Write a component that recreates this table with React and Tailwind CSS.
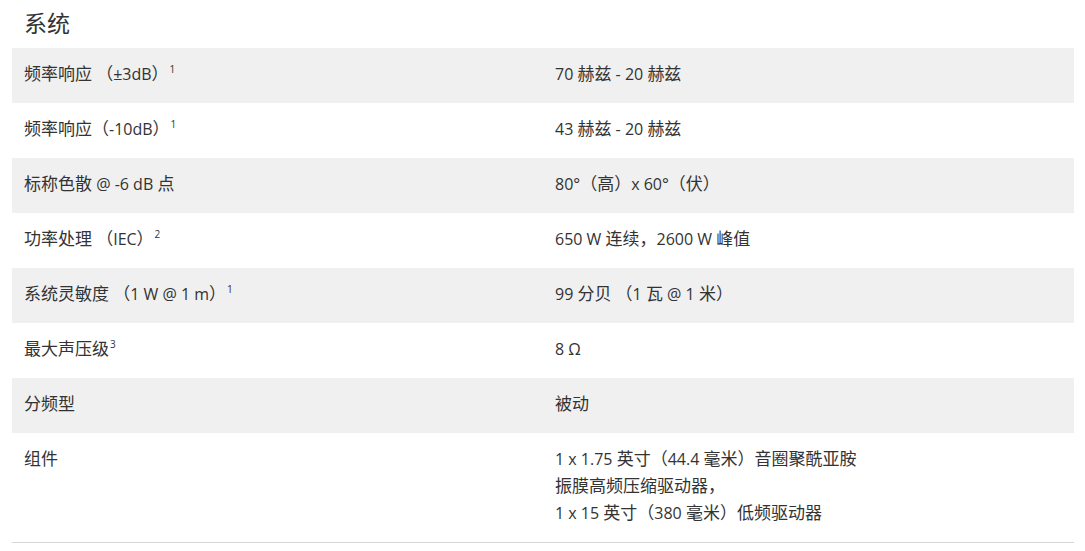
// CJK glyphs in the shot render a touch larger than the Latin ones
const CJK = /([\u3000-\u303f\u4e00-\u9fff\uff00-\uffef]+)/;

function T({ s }) {
  return s.split(CJK).map((part, i) =>
    i % 2 === 1 ? (
      <span key={i} className="text-[17px] leading-[18px]">{part}</span>
    ) : (
      part
    )
  );
}

function Sup({ n }) {
  return <sup className="text-[10px] -top-[7px] ml-[1px]">{n}</sup>;
}

const rows = [
  { k: <><T s="频率响应 （±3dB）" /><Sup n="1" /></>, v: "70 赫兹 - 20 赫兹" },
  { k: <><T s="频率响应（-10dB）" /><Sup n="1" /></>, v: "43 赫兹 - 20 赫兹" },
  { k: <T s="标称色散 @ -6 dB 点" />, v: "80°（高）x 60°（伏）" },
  { k: <><T s="功率处理 （IEC）" /><Sup n="2" /></>, v: "650 W 连续，2600 W 峰值" },
  { k: <><T s="系统灵敏度 （1 W @ 1 m）" /><Sup n="1" /></>, v: "99 分贝 （1 瓦 @ 1 米）" },
  { k: <><T s="最大声压级" /><Sup n="3" /></>, v: "8 Ω" },
  { k: <T s="分频型" />, v: "被动" },
  {
    k: <T s="组件" />,
    v: (
      <>
        <T s="1 x 1.75 英寸（44.4 毫米）音圈聚酰亚胺" />
        <br />
        <T s="振膜高频压缩驱动器，" />
        <br />
        <T s="1 x 15 英寸（380 毫米）低频驱动器" />
      </>
    ),
  },
];

export default function App() {
  return (
    <div
      className="bg-white text-[#333] px-[12px] w-[1085px] h-[551px]"
      style={{ fontFamily: '"Open Sans", "Noto Sans CJK SC", sans-serif' }}
    >
      {/* heading */}
      <h2 className="text-[23px] leading-[46px] pl-[12px] h-[48px]">系统</h2>

      {/* spec table */}
      <div className="border-b border-[#d6d6d6] w-[1062px]">
        {rows.map((r, i) => (
          <div
            key={i}
            className={`grid grid-cols-2 text-[16px] leading-[27px] pt-[13px] pb-[15px] ${i % 2 === 0 ? "bg-[#f0f0f0]" : "bg-white"}`}
          >
            <div className="px-[12px]">{r.k}</div>
            <div className="px-[12px]">{typeof r.v === "string" ? <T s={r.v} /> : r.v}</div>
          </div>
        ))}
      </div>
    </div>
  );
}
